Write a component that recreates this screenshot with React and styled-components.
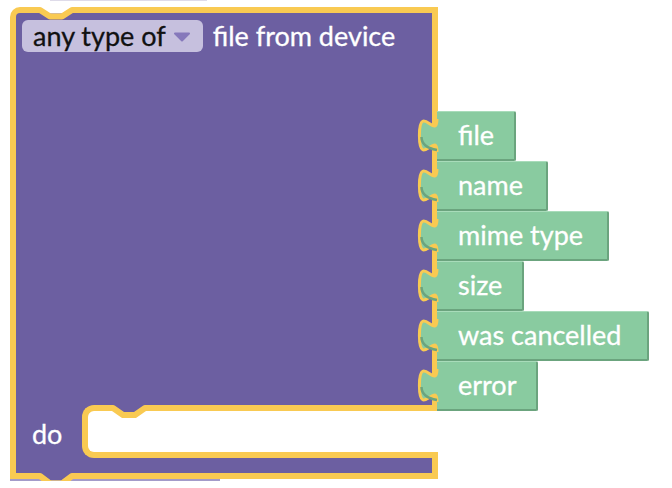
import React from "react";
import styled, { createGlobalStyle } from "styled-components";

const PURPLE = "#6c5fa1";
const YELLOW = "#f9ca52";
const GREEN = "#89cba0";
const GREEN_DARK = "#6ba47e";
const GREEN_LIGHT = "#a8dcba";

const outputs = [
  { label: "file", width: 79 },
  { label: "name", width: 111 },
  { label: "mime type", width: 172 },
  { label: "size", width: 87 },
  { label: "was cancelled", width: 212 },
  { label: "error", width: 101 },
];

const GlobalStyle = createGlobalStyle`
  body {
    margin: 0;
    background: #ffffff;
    font-family: Lato, "Open Sans", sans-serif;
  }
`;

const Canvas = styled.div`
  padding-left: 10px;
`;

const PrevShadow = styled.div`
  width: 157px;
  height: 1px;
  margin-left: 40px;
  margin-bottom: 6px;
  background: #dedbe9;
`;

const Block = styled.div`
  position: relative;
`;

const TopRow = styled.div`
  display: flex;
  align-items: flex-start;
`;

const TopArm = styled.div`
  box-sizing: border-box;
  flex: 0 0 428px;
  height: 398px;
  background: ${PURPLE};
  border: 6px solid ${YELLOW};
  border-bottom: none;
  border-top-left-radius: 10px;
  padding: 7px 0 0 6px;
`;

const Header = styled.div`
  display: flex;
  align-items: center;
  gap: 10px;
`;

const Dropdown = styled.div`
  display: inline-flex;
  align-items: center;
  height: 32px;
  padding: 0 12px 0 11px;
  border-radius: 6px;
  background: #c6c0de;
  color: #111;
  font-size: 27px;
  line-height: 32px;
  -webkit-text-stroke: 0.3px #111;
`;

const Caret = styled.svg`
  margin-left: 7px;
  margin-top: 2px;
`;

const Label = styled.span`
  color: #ffffff;
  font-size: 27px;
  line-height: 32px;
  white-space: nowrap;
  -webkit-text-stroke: 0.3px #ffffff;
`;

const Outputs = styled.div`
  display: flex;
  flex-direction: column;
  margin-top: 104px;
  margin-bottom: -6px;
  margin-left: -1px;
`;

const OutputBlock = styled.div`
  position: relative;
  box-sizing: border-box;
  width: ${(p) => p.$w}px;
  height: 50px;
  display: flex;
  align-items: center;
  padding: 0 0 2px 21px;
  background: ${GREEN};
  border-top: 1px solid ${GREEN_LIGHT};
  border-right: 2px solid ${GREEN_DARK};
  border-bottom: 2px solid ${GREEN_DARK};
  border-radius: 0 2px 2px 0;
`;

const Tab = styled.svg`
  position: absolute;
  left: -22px;
  top: 5px;
  overflow: visible;
`;

const MiddleRow = styled.div`
  display: flex;
  width: 428px;
  height: 53px;
  background: ${PURPLE};
`;

const DoCell = styled.div`
  box-sizing: border-box;
  flex: 0 0 72px;
  display: flex;
  align-items: center;
  padding: 4px 0 0 16px;
  border-left: 6px solid ${YELLOW};
`;

const Statement = styled.div`
  flex: 1;
  background: #ffffff;
  border: 6px solid ${YELLOW};
  border-right: none;
  border-radius: 12px 0 0 12px;
`;

const BottomArm = styled.div`
  box-sizing: border-box;
  width: 428px;
  height: 21px;
  background: ${PURPLE};
  border: 6px solid ${YELLOW};
  border-top: none;
`;

const Trail = styled.div`
  width: 210px;
  height: 2px;
  background: #a39bc9;
`;

const Notch = styled.svg`
  position: absolute;
  left: ${(p) => p.$x}px;
  top: ${(p) => p.$y}px;
  overflow: visible;
  z-index: 2;
`;

const OutputTab = () => (
  <Tab width="23" height="36" viewBox="0 0 23 36">
    <path
      d="M22,2 c0,22 -17.6,-17.6 -17.6,16.5 s17.6,-5.5 17.6,16.5"
      fill={GREEN}
      stroke={YELLOW}
      strokeWidth="3"
    />
    <path
      d="M6.5,20 c0,6 4,11 15.5,13"
      fill="none"
      stroke={GREEN_DARK}
      strokeWidth="2.5"
    />
  </Tab>
);

export default function App() {
  return (
    <Canvas>
      <GlobalStyle />
      <PrevShadow />
      <Block>
        <TopRow>
          <TopArm>
            <Header>
              <Dropdown>
                any type of
                <Caret width="18" height="10" viewBox="0 0 18 10">
                  <path
                    d="M2,1.5 L16,1.5 L9,8.5 Z"
                    fill="#8679bb"
                    stroke="#8679bb"
                    strokeWidth="2"
                    strokeLinejoin="round"
                  />
                </Caret>
              </Dropdown>
              <Label>file from device</Label>
            </Header>
          </TopArm>
          <Outputs>
            {outputs.map((o) => (
              <OutputBlock key={o.label} $w={o.width}>
                <OutputTab />
                <Label>{o.label}</Label>
              </OutputBlock>
            ))}
          </Outputs>
        </TopRow>
        <MiddleRow>
          <DoCell>
            <Label>do</Label>
          </DoCell>
          <Statement />
        </MiddleRow>
        <BottomArm />
        <Trail />

        {/* previous connection, dent in the top edge */}
        <Notch $x={26} $y={0} width="40" height="16" viewBox="0 0 40 16">
          <polygon points="1,-1 39,-1 26,6.5 14,6.5" fill="#ffffff" />
          <polyline
            points="-2,3 4,3 14,9.5 26,9.5 36,3 42,3"
            fill="none"
            stroke={YELLOW}
            strokeWidth="6"
            strokeLinejoin="round"
          />
        </Notch>

        {/* statement input connection */}
        <Notch $x={99} $y={395} width="40" height="20" viewBox="0 0 40 20">
          <polygon points="2,2 38,2 26,10 14,10" fill={PURPLE} />
          <polyline
            points="-2,6 4,6 14,13 26,13 36,6 42,6"
            fill="none"
            stroke={YELLOW}
            strokeWidth="6"
            strokeLinejoin="round"
          />
        </Notch>

        {/* next connection, bump below the block */}
        <Notch $x={26} $y={463} width="40" height="20" viewBox="0 0 40 20">
          <polygon points="2,2 38,2 26,10 14,10" fill={PURPLE} />
          <polyline
            points="-2,6 4,6 14,13.5 26,13.5 36,6 42,6"
            fill="none"
            stroke={YELLOW}
            strokeWidth="6"
            strokeLinejoin="round"
          />
        </Notch>
      </Block>
    </Canvas>
  );
}
